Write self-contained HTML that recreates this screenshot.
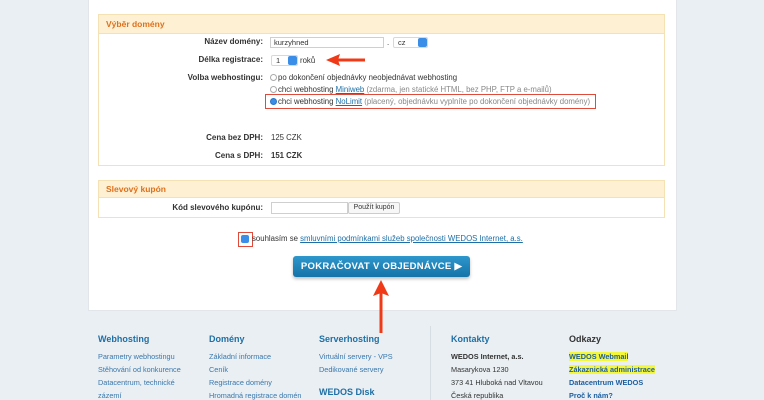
<!DOCTYPE html>
<html><head><meta charset="utf-8">
<style>
*{margin:0;padding:0;box-sizing:border-box}
body{width:764px;height:400px;overflow:hidden;background:#e9eff3;font-family:"Liberation Sans",sans-serif;position:relative;color:#333}
.a{position:absolute;white-space:nowrap}
.panel{position:absolute;left:88px;top:0;width:589px;height:311px;background:#fff;border:1px solid #e2e6ea;border-top:none}
.box{position:absolute;left:98px;width:567px;border:1px solid #f5e2b4;background:#fff}
.hd{background:#fdf0d3;border-bottom:1px solid #f5e2b4;color:#e0701c;font-weight:bold;font-size:8.5px;padding-left:7px}
.lb{font-size:8px;font-weight:bold;text-align:right;width:160px;left:103px}
.t{font-size:7.8px}
.inp{position:absolute;border:1px solid #cfcfcf;background:#fff;font-size:7.5px;padding-left:3px;line-height:10px}
.sel{position:absolute;border:1px solid #d8d8d8;border-radius:2px;background:#fff;font-size:7.5px;line-height:9px;padding-left:4px}
.sel i{position:absolute;right:0;top:0;width:9px;height:100%;background:#3b8ee8;border-radius:2px}
.rad{position:absolute;width:7px;height:7px;border:1px solid #aaa;border-radius:50%;background:#fff}
a{color:#1c6fa8;text-decoration:underline}
.g{color:#888}
.fh{font-size:9px;font-weight:bold;color:#1f6fa5}
.fi{font-size:7.3px;color:#3a78ad}
.fk{font-size:7.3px;color:#333}
.fo{font-size:7.3px;color:#1f5fa0;font-weight:bold}
</style></head><body>
<div class="panel"></div>

<div class="box" style="top:14px;height:152px"><div class="hd" style="height:19px;line-height:18px">Výběr domény</div></div>
<div class="a lb" style="top:37px">Název domény:</div>
<div class="inp" style="left:270px;top:37px;width:114px;height:11px">kurzyhned</div>
<div class="a t" style="left:387px;top:38px">.</div>
<div class="sel" style="left:393px;top:37px;width:35px;height:11px">cz<i></i></div>
<div class="a lb" style="top:55px">Délka registrace:</div>
<div class="sel" style="left:271px;top:55px;width:27px;height:11px">1<i></i></div>
<div class="a t" style="left:300px;top:56px">roků</div>
<svg class="a" style="left:322px;top:52px" width="44" height="16"><path d="M43 8 L16 8" stroke="#f03a17" stroke-width="3"/><path d="M4 8 L18 2 L16 8 L18 14Z" fill="#f03a17"/></svg>
<div class="a lb" style="top:73px">Volba webhostingu:</div>
<div class="rad" style="left:270px;top:74px"></div>
<div class="a t" style="left:278px;top:73px">po dokončení objednávky neobjednávat webhosting</div>
<div class="rad" style="left:270px;top:86px"></div>
<div class="a t" style="left:278px;top:85px">chci webhosting <a>Miniweb</a> <span class="g">(zdarma, jen statické HTML, bez PHP, FTP a e-mailů)</span></div>
<div class="a" style="left:265px;top:94px;width:331px;height:15px;border:1.5px solid #e04a3a"></div>
<div class="rad" style="left:270px;top:98px;background:#3b8ee8;border-color:#2a74c8"></div>
<div class="a t" style="left:278px;top:97px">chci webhosting <a>NoLimit</a> <span class="g">(placený, objednávku vyplníte po dokončení objednávky domény)</span></div>
<div class="a lb" style="top:133px">Cena bez DPH:</div>
<div class="a t" style="left:271px;top:133px">125 CZK</div>
<div class="a lb" style="top:151px">Cena s DPH:</div>
<div class="a t" style="left:271px;top:151px;font-weight:bold">151 CZK</div>

<div class="box" style="top:180px;height:38px"><div class="hd" style="height:17px;line-height:16px">Slevový kupón</div></div>
<div class="a lb" style="top:203px">Kód slevového kupónu:</div>
<div class="inp" style="left:271px;top:202px;width:77px;height:12px"></div>
<div class="a" style="left:348px;top:202px;width:52px;height:12px;border:1px solid #ccc;border-radius:2px;background:#f7f7f7;font-size:7px;text-align:center;line-height:10px">Použít kupón</div>

<div class="a" style="left:238px;top:232px;width:15px;height:15px;border:1.5px solid #e04a3a"></div>
<div class="a" style="left:241px;top:235px;width:8px;height:8px;background:#3b8ee8;border-radius:2px"></div>
<div class="a t" style="left:252px;top:234px">souhlasím se <a>smluvními podmínkami služeb společnosti WEDOS Internet, a.s.</a></div>

<div class="a" style="left:293px;top:256px;width:177px;height:21px;border-radius:3px;background:linear-gradient(#2e97cc,#1573a8);box-shadow:0 2px 3px rgba(0,0,0,.25);color:#fff;font-weight:bold;font-size:9.5px;letter-spacing:0.3px;line-height:21px;text-align:center">POKRAČOVAT V OBJEDNÁVCE ▶</div>
<svg class="a" style="left:370px;top:278px" width="22" height="56"><path d="M11 14 L11 55" stroke="#f03a17" stroke-width="3"/><path d="M11 2 L19 18 L11 15 L3 18Z" fill="#f03a17"/></svg>

<div class="a" style="left:430px;top:326px;width:1px;height:74px;background:#d6dde3"></div>
<div class="a fh" style="left:98px;top:334px">Webhosting</div>
<div class="a fi" style="left:98px;top:352px">Parametry webhostingu</div>
<div class="a fi" style="left:98px;top:365px">Stěhování od konkurence</div>
<div class="a fi" style="left:98px;top:378px">Datacentrum, technické</div>
<div class="a fi" style="left:98px;top:391px">zázemí</div>
<div class="a fh" style="left:209px;top:334px">Domény</div>
<div class="a fi" style="left:209px;top:352px">Základní informace</div>
<div class="a fi" style="left:209px;top:365px">Ceník</div>
<div class="a fi" style="left:209px;top:378px">Registrace domény</div>
<div class="a fi" style="left:209px;top:391px">Hromadná registrace domén</div>
<div class="a fh" style="left:319px;top:334px">Serverhosting</div>
<div class="a fi" style="left:319px;top:352px">Virtuální servery - VPS</div>
<div class="a fi" style="left:319px;top:365px">Dedikované servery</div>
<div class="a fh" style="left:319px;top:387px">WEDOS Disk</div>
<div class="a fh" style="left:451px;top:334px">Kontakty</div>
<div class="a fk" style="left:451px;top:352px;font-weight:bold">WEDOS Internet, a.s.</div>
<div class="a fk" style="left:451px;top:365px">Masarykova 1230</div>
<div class="a fk" style="left:451px;top:378px">373 41 Hluboká nad Vltavou</div>
<div class="a fk" style="left:451px;top:391px">Česká republika</div>
<div class="a fh" style="left:569px;top:334px;color:#333">Odkazy</div>
<div class="a fo" style="left:569px;top:352px;background:#f4f73a">WEDOS Webmail</div>
<div class="a fo" style="left:569px;top:365px;background:#f4f73a">Zákaznická administrace</div>
<div class="a fo" style="left:569px;top:378px">Datacentrum WEDOS</div>
<div class="a fo" style="left:569px;top:391px">Proč k nám?</div>
</body></html>
